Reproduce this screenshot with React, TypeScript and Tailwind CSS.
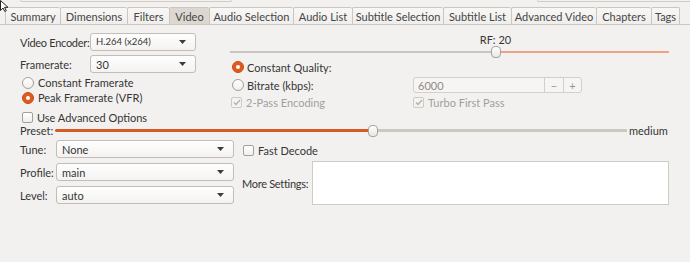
import React from "react";

const TABS: { label: string; w: number; active?: boolean }[] = [
  { label: "Summary", w: 55 },
  { label: "Dimensions", w: 67 },
  { label: "Filters", w: 42 },
  { label: "Video", w: 40, active: true },
  { label: "Audio Selection", w: 84 },
  { label: "Audio List", w: 59 },
  { label: "Subtitle Selection", w: 91 },
  { label: "Subtitle List", w: 68 },
  { label: "Advanced Video", w: 85 },
  { label: "Chapters", w: 55 },
  { label: "Tags", w: 29 },
];

const Caret = () => (
  <svg width="7" height="4" viewBox="0 0 7 4" className="shrink-0">
    <path d="M0 0h7L3.5 4z" fill="#3c3c3c" />
  </svg>
);

const Combo = ({ value, className = "", small = false }: { value: string; className?: string; small?: boolean }) => (
  <div
    className={`flex items-center justify-between h-[18px] rounded-[3px] border border-[#c2bdb6] bg-gradient-to-b from-[#fefefe] to-[#f4f3f1] pl-[5px] pr-[9px] ${className}`}
  >
    <span className={small ? "text-[9.5px]" : ""}>{value}</span>
    <Caret />
  </div>
);

const Radio = ({ checked = false }: { checked?: boolean }) =>
  checked ? (
    <span className="flex items-center justify-center w-[12px] h-[12px] rounded-full bg-[#e05a1f] border border-[#c84d17] shrink-0">
      <span className="w-[4px] h-[4px] rounded-full bg-white" />
    </span>
  ) : (
    <span className="w-[12px] h-[12px] rounded-full border border-[#a39f99] bg-gradient-to-b from-white to-[#f0efed] shrink-0" />
  );

const Check = ({ checked = false, disabled = false }: { checked?: boolean; disabled?: boolean }) => (
  <span
    className={`flex items-center justify-center w-[11px] h-[11px] rounded-[2px] border shrink-0 ${
      disabled ? "border-[#cdc9c3] bg-[#f4f3f1]" : "border-[#a39f99] bg-gradient-to-b from-white to-[#f0efed]"
    }`}
  >
    {checked && (
      <svg width="8" height="7" viewBox="0 0 8 7">
        <path d="M1 3.5l2 2L7 1" fill="none" stroke={disabled ? "#b3afa9" : "#3c3c3c"} strokeWidth="1.3" />
      </svg>
    )}
  </span>
);

const Thumb = () => (
  <span className="w-[10px] h-[12px] rounded-[4px] border border-[#a8a39c] bg-gradient-to-b from-white to-[#e9e7e3] shrink-0" />
);

const Cursor = () => (
  <svg width="9" height="12" viewBox="0 0 9 12" className="absolute left-0 top-0">
    <path d="M0.5 0.5v10l2.5-2.5 1.8 3.5 1.5-0.8-1.8-3.4h3.5z" fill="#fff" stroke="#222" strokeWidth="1" />
  </svg>
);

export default function App() {
  return (
    <div className="relative w-[690px] h-[262px] overflow-hidden bg-[#f2f1f0] text-[11px] text-[#353535] font-['Lato',sans-serif] leading-none whitespace-nowrap">
      <Cursor />

      {/* bits of the widgets above */}
      <div className="flex h-[7px]">
        <div className="ml-[20px] w-[212px] h-[2px] border-x border-b border-[#cfcbc5] rounded-b-[3px]" />
        <div className="ml-[305px] flex-1 h-[2px] border-l border-b border-[#cfcbc5] rounded-bl-[3px]" />
      </div>

      {/* Tab bar */}
      <div className="flex h-[18px] pl-[5px] border-b border-[#cbc7c0]">
        {TABS.map((tab) => (
          <div
            key={tab.label}
            style={{ width: tab.w }}
            className={`flex items-center justify-center border-l border-t border-[#cbc7c0] text-[#454545] rounded-t-[2px] last:border-r ${
              tab.active ? "bg-[#dcd8d1]" : "bg-gradient-to-b from-[#f8f7f6] to-[#efeeec]"
            }`}
          >
            {tab.label}
          </div>
        ))}
      </div>

      {/* Top section */}
      <div className="flex pl-[20px] h-[99px]">
        <div className="w-[176px] flex flex-col">
          <div className="flex items-center mt-[8px]">
            <span className="w-[70px] tracking-[-0.3px]">Video Encoder:</span>
            <Combo value="H.264 (x264)" small className="flex-1" />
          </div>
          <div className="flex items-center mt-[4px]">
            <span className="w-[70px]">Framerate:</span>
            <Combo value="30" className="flex-1" />
          </div>
          <div className="flex items-center gap-[4px] h-[15px] mt-[2px] pl-[2px]">
            <Radio />
            <span>Constant Framerate</span>
          </div>
          <div className="flex items-center gap-[4px] h-[15px] pl-[2px]">
            <Radio checked />
            <span>Peak Framerate (VFR)</span>
          </div>
          <div className="flex items-center gap-[4px] h-[14px] mt-[5px] pl-[2px]">
            <Check />
            <span>Use Advanced Options</span>
          </div>
        </div>

        <div className="ml-[34px] w-[439px] flex flex-col">
          <div className="h-[13px] mt-[8px] flex items-center justify-center pl-[92px]">RF: 20</div>
          <div className="h-[12px] flex items-center">
            <div className="w-[261px] h-[2px] bg-[#c9c5be]" />
            <Thumb />
            <div className="flex-1 h-[2px] bg-[#eaa584]" />
          </div>
          <div className="flex items-center gap-[3px] h-[14px] mt-[2px] pl-[2px]">
            <Radio checked />
            <span>Constant Quality:</span>
          </div>
          <div className="flex items-center h-[16px] mt-[3px] pl-[2px]">
            <Radio />
            <span className="ml-[3px] w-[166px]">Bitrate (kbps):</span>
            <div className="flex w-[169px] h-[16px] rounded-[3px] border border-[#d3cfc9] bg-[#f6f5f4]">
              <span className="flex-1 flex items-center pl-[4px] text-[#8e8a85]">6000</span>
              <span className="w-[19px] flex items-center justify-center border-l border-[#d3cfc9] text-[#9a9691]">−</span>
              <span className="w-[18px] flex items-center justify-center border-l border-[#d3cfc9] text-[#9a9691]">+</span>
            </div>
          </div>
          <div className="flex items-center h-[14px] mt-[2px] pl-[1px] text-[#a29f9a]">
            <Check checked disabled />
            <span className="ml-[4px] w-[167px]">2-Pass Encoding</span>
            <Check checked disabled />
            <span className="ml-[4px]">Turbo First Pass</span>
          </div>
        </div>
      </div>

      {/* Preset */}
      <div className="flex items-center h-[13px] pl-[20px]">
        <span className="w-[35px]">Preset:</span>
        <div className="w-[313px] h-[3px] bg-[#d55a23] rounded-l-[2px]" />
        <Thumb />
        <div className="w-[249px] h-[3px] bg-[#cdc9c2]" />
        <span className="ml-[2px]">medium</span>
      </div>

      {/* Bottom section */}
      <div className="flex pl-[20px] mt-[3px]">
        <div className="w-[214px] flex flex-col gap-[5px]">
          <div className="flex items-center">
            <span className="w-[36px]">Tune:</span>
            <Combo value="None" className="flex-1" />
          </div>
          <div className="flex items-center">
            <span className="w-[36px]">Profile:</span>
            <Combo value="main" className="flex-1" />
          </div>
          <div className="flex items-center">
            <span className="w-[36px]">Level:</span>
            <Combo value="auto" className="flex-1" />
          </div>
        </div>
        <div className="ml-[8px] w-[427px] flex flex-col">
          <div className="flex items-center gap-[4px] h-[14px] mt-[3px] pl-[1px]">
            <Check />
            <span>Fast Decode</span>
          </div>
          <div className="flex items-center mt-[4px]">
            <span className="w-[70px] tracking-[-0.3px]">More Settings:</span>
            <div className="flex-1 h-[44px] bg-white border border-[#cfcbc5]" />
          </div>
        </div>
      </div>
    </div>
  );
}
